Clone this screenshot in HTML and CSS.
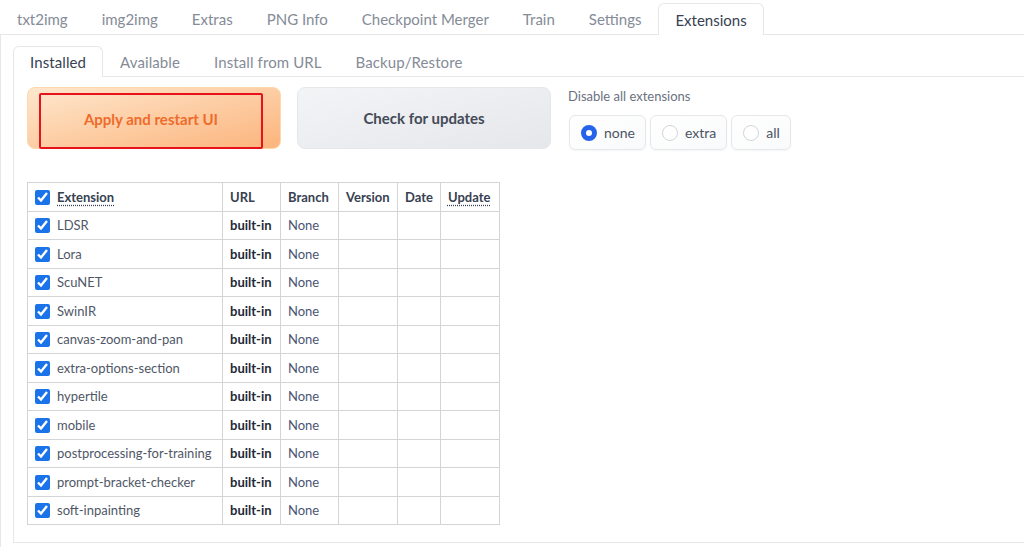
FILE: index.html
```html
<!DOCTYPE html>
<html lang="en">
<head>
  <meta charset="UTF-8" />
  <title>Stable Diffusion – Extensions</title>
  <link rel="stylesheet" href="styles.css">
</head>
<body>
  <div class="app">
    <div class="tab-nav">
      <button class="tab">txt2img</button>
      <button class="tab">img2img</button>
      <button class="tab">Extras</button>
      <button class="tab">PNG Info</button>
      <button class="tab">Checkpoint Merger</button>
      <button class="tab">Train</button>
      <button class="tab">Settings</button>
      <button class="tab selected">Extensions</button>
    </div>
    <div class="tab-panel outer">
      <div class="tab-nav sub">
        <button class="tab selected">Installed</button>
        <button class="tab">Available</button>
        <button class="tab">Install from URL</button>
        <button class="tab">Backup/Restore</button>
      </div>
      <div class="tab-panel inner">
        <div class="controls">
          <button class="btn primary"><span class="focus-ring">Apply and restart UI</span></button>
          <button class="btn secondary">Check for updates</button>
          <div class="radio-block">
            <span class="radio-label">Disable all extensions</span>
            <div class="radio-group">
              <label class="radio-item"><span class="radio checked"></span>none</label>
              <label class="radio-item"><span class="radio"></span>extra</label>
              <label class="radio-item"><span class="radio"></span>all</label>
            </div>
          </div>
        </div>

        <table class="ext-table">
          <thead>
            <tr>
              <th class="col-name"><input type="checkbox" checked><abbr>Extension</abbr></th>
              <th class="col-url">URL</th>
              <th class="col-branch">Branch</th>
              <th class="col-version">Version</th>
              <th class="col-date">Date</th>
              <th class="col-update"><abbr>Update</abbr></th>
            </tr>
          </thead>
          <tbody>
            <tr><td><input type="checkbox" checked>LDSR</td><td class="url">built-in</td><td class="branch">None</td><td></td><td></td><td></td></tr>
            <tr><td><input type="checkbox" checked>Lora</td><td class="url">built-in</td><td class="branch">None</td><td></td><td></td><td></td></tr>
            <tr><td><input type="checkbox" checked>ScuNET</td><td class="url">built-in</td><td class="branch">None</td><td></td><td></td><td></td></tr>
            <tr><td><input type="checkbox" checked>SwinIR</td><td class="url">built-in</td><td class="branch">None</td><td></td><td></td><td></td></tr>
            <tr><td><input type="checkbox" checked>canvas-zoom-and-pan</td><td class="url">built-in</td><td class="branch">None</td><td></td><td></td><td></td></tr>
            <tr><td><input type="checkbox" checked>extra-options-section</td><td class="url">built-in</td><td class="branch">None</td><td></td><td></td><td></td></tr>
            <tr><td><input type="checkbox" checked>hypertile</td><td class="url">built-in</td><td class="branch">None</td><td></td><td></td><td></td></tr>
            <tr><td><input type="checkbox" checked>mobile</td><td class="url">built-in</td><td class="branch">None</td><td></td><td></td><td></td></tr>
            <tr><td><input type="checkbox" checked>postprocessing-for-training</td><td class="url">built-in</td><td class="branch">None</td><td></td><td></td><td></td></tr>
            <tr><td><input type="checkbox" checked>prompt-bracket-checker</td><td class="url">built-in</td><td class="branch">None</td><td></td><td></td><td></td></tr>
            <tr><td><input type="checkbox" checked>soft-inpainting</td><td class="url">built-in</td><td class="branch">None</td><td></td><td></td><td></td></tr>
          </tbody>
        </table>
      </div>
    </div>
  </div>
</body>
</html>
```

FILE: styles.css
```css
* {
  box-sizing: border-box;
}
body {
  margin: 0;
  font-family: Lato, 'Liberation Sans', sans-serif;
  background: #fff;
  color: #374151;
  overflow: hidden;
}
.app {
  width: 1060px;
  height: 547px;
  overflow: hidden;
  padding-top: 3px;
}
.tab-nav {
  display: flex;
  border-bottom: 1px solid #e5e7eb;
}
.tab {
  font-family: inherit;
  font-size: 15px;
  color: #858b97;
  background: none;
  border: 1px solid transparent;
  border-bottom: none;
  border-radius: 6px 6px 0 0;
  padding: 0 16px;
  height: 31px;
  margin-bottom: -1px;
  cursor: pointer;
}
.tab.selected {
  color: #374151;
  background: #fff;
  border-color: #e5e7eb;
  height: 32px;
}
.sub .tab {
  letter-spacing: 0.1px;
}
.sub .tab.selected {
  height: 31px;
}
.tab-panel {
  border: 1px solid #e5e7eb;
  border-top: none;
}
.outer {
  padding: 11px 0 0 12px;
  height: 560px;
}
.inner {
  padding: 10px 13px 17px;
}
.controls {
  display: flex;
  gap: 16px;
  align-items: flex-start;
}
.btn {
  width: 254px;
  height: 62px;
  border-radius: 8px;
  font-family: inherit;
  font-size: 15px;
  font-weight: 700;
  cursor: pointer;
  display: flex;
  align-items: center;
  justify-content: center;
}
.primary {
  background: linear-gradient(to bottom right, #fee7cd, #fcb47c);
  border: 1px solid #fed7aa;
  color: #ed6c2c;
  padding: 4px 17px 0 11px;
}
.focus-ring {
  display: flex;
  align-items: center;
  justify-content: center;
  width: 100%;
  height: 100%;
  padding-bottom: 4px;
  border: 2px solid #e8121a;
  border-radius: 2px;
  margin-bottom: -1px;
}
.secondary {
  background: linear-gradient(to bottom right, #f3f4f6, #e5e7eb);
  border: 1px solid #e5e7eb;
  color: #434a58;
}
.radio-block {
  display: flex;
  flex-direction: column;
  gap: 11px;
  padding-top: 1px;
  margin-left: 1px;
}
.radio-label {
  font-size: 13px;
  color: #6b7280;
}
.radio-group {
  display: flex;
  gap: 4px;
  margin-left: 1px;
}
.radio-item {
  display: flex;
  align-items: center;
  gap: 7px;
  height: 35px;
  padding: 0 10px 0 11px;
  border: 1px solid #e5e7eb;
  border-radius: 6px;
  background: linear-gradient(to bottom right, #fff, #f9fafb);
  box-shadow: 0 1px 2px rgba(0, 0, 0, 0.04);
  font-size: 14px;
  color: #4b5563;
}
.radio {
  width: 16px;
  height: 16px;
  border-radius: 50%;
  border: 1px solid #d1d5db;
  background: #fff;
}
.radio.checked {
  border: 5px solid #2563eb;
}
.ext-table {
  margin-top: 32px;
  border-collapse: collapse;
  font-size: 13px;
}
.ext-table th,
.ext-table td {
  border: 1px solid #d4d4d4;
  height: 28.5px;
  padding: 0 7px;
  text-align: left;
  white-space: nowrap;
}
.ext-table th {
  font-weight: 700;
  color: #374151;
}
.ext-table abbr {
  text-decoration: underline dotted;
  text-underline-offset: 3px;
}
.ext-table td {
  color: #4f5766;
}
.ext-table input {
  width: 15px;
  height: 15px;
  margin: 0 7px 0 0;
  vertical-align: -3px;
  accent-color: #1a73e8;
}
.ext-table .url {
  font-weight: 700;
  color: #1f2937;
}
.ext-table .branch {
  color: #4b5573;
}
.col-name { width: 195px; }
.col-url { width: 58px; }
.col-branch { width: 58px; }
.col-version { width: 59px; }
.col-date { width: 42px; }
.col-update { width: 59px; }
```
